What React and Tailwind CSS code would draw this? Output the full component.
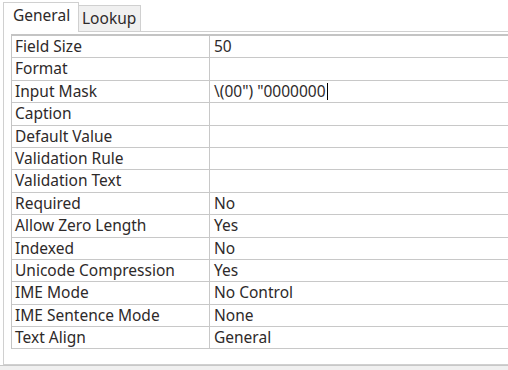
import React from "react";

const rows = [
  ["Field Size", "50"],
  ["Format", ""],
  ["Input Mask", "mask"],
  ["Caption", ""],
  ["Default Value", ""],
  ["Validation Rule", ""],
  ["Validation Text", ""],
  ["Required", "No"],
  ["Allow Zero Length", "Yes"],
  ["Indexed", "No"],
  ["Unicode Compression", "Yes"],
  ["IME Mode", "No Control"],
  ["IME Sentence Mode", "None"],
  ["Text Align", "General"],
];

export default function App() {
  return (
    <div
      className="w-[508px] h-[370px] bg-white overflow-hidden flex flex-col text-[15.5px] text-[#2e2a2a]"
      style={{ fontFamily: '"Noto Sans", "Open Sans", sans-serif' }}
    >
      <div className="h-[365px] pt-[2px] pl-[3px] flex flex-col">
        <div className="flex items-end h-[30px]">
          <div className="w-[76px] h-[30px] border-l border-t border-r border-[#d0d0d0] bg-white pl-[9px] pt-[2px] leading-[21px]">
            General
          </div>
          <div className="w-[62px] h-[27px] border-t border-r border-b border-[#d0d0d0] bg-[#f0f0f0] pl-[3px] leading-[24px]">
            Lookup
          </div>
          <div className="flex-1 h-[1px] border-b border-[#d0d0d0]" />
        </div>
        <div className="flex-1 border-l border-b border-[#d0d0d0] -mt-[1px] pt-[3px] pl-[7px] pb-[5px]">
          <div className="border-t-2 border-l border-[#c4c4c4] w-[600px]">
            {rows.map(([k, v]) => (
              <div key={k} className="flex h-[22.4px] border-b border-[#c8c8c8] leading-[21px]">
                <div className="w-[198px] pl-[3px] border-r border-[#c8c8c8] whitespace-nowrap">{k}</div>
                <div className="flex-1 pl-[4px] whitespace-nowrap">
                  {v === "mask" ? (
                    <span className="inline-flex items-center">
                      {'\\(00") "0000000'}
                      <span className="inline-block w-[1.5px] h-[17px] bg-black ml-[1px]" />
                    </span>
                  ) : (
                    v
                  )}
                </div>
              </div>
            ))}
          </div>
        </div>
      </div>
      <div className="flex-1 border-t border-[#c8c8c8] bg-[#f0f0f0]" />
    </div>
  );
}
